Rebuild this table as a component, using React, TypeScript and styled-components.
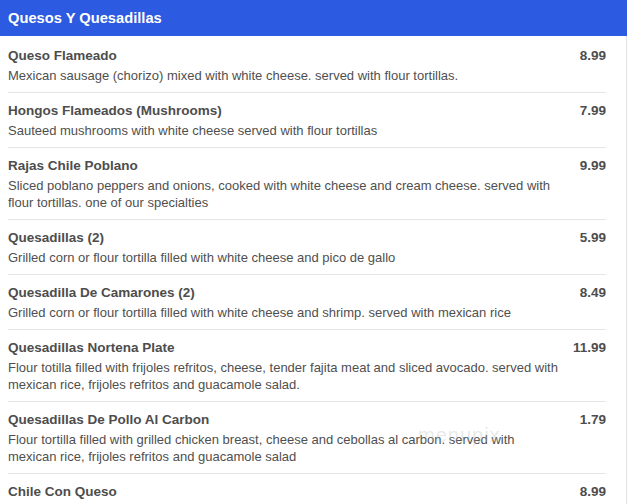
import React from "react";
import styled, { createGlobalStyle } from "styled-components";

const Global = createGlobalStyle`
  html, body { margin: 0; padding: 0; background: #fff; }
  body { font-family: "Liberation Sans", Arial, sans-serif; }
`;

const Panel = styled.div`
  position: relative;
  width: 627px;
  border-right: 1px solid #e2e2e2;
  min-height: 504px;
  box-sizing: border-box;
`;

const Header = styled.div`
  height: 36px;
  background: #2c5ae0;
  color: #fff;
  font-weight: bold;
  font-size: 14.7px;
  display: flex;
  align-items: center;
  padding-left: 8px;
  margin-right: -1px;
`;

const List = styled.div`
  padding: 2px 20px 0 8px;
`;

const Row = styled.div`
  display: flex;
  justify-content: space-between;
  gap: 12px;
  padding: 9px 0 8px;
  border-bottom: 1px solid #e6e6e6;
  &:last-child { border-bottom: none; }
`;

const Info = styled.div`
  display: flex;
  flex-direction: column;
  gap: 3px;
  max-width: 570px;
`;

const Name = styled.div`
  font-size: 13.5px;
  font-weight: bold;
  color: #4d4d4d;
  line-height: 17px;
`;

const Desc = styled.div`
  font-size: 13px;
  color: #4f4f4f;
  line-height: 17px;
  white-space: pre-line;
`;

const Price = styled.div`
  font-size: 13.5px;
  font-weight: bold;
  color: #4d4d4d;
  line-height: 17px;
  white-space: nowrap;
`;

const Watermark = styled.div`
  position: absolute;
  left: 418px;
  top: 424px;
  font-size: 20px;
  letter-spacing: 1px;
  color: rgba(180, 180, 180, 0.3);
  pointer-events: none;
`;

const items = [
  { name: "Queso Flameado", desc: "Mexican sausage (chorizo) mixed with white cheese. served with flour tortillas.", price: "8.99" },
  { name: "Hongos Flameados (Mushrooms)", desc: "Sauteed mushrooms with white cheese served with flour tortillas", price: "7.99" },
  { name: "Rajas Chile Poblano", desc: "Sliced poblano peppers and onions, cooked with white cheese and cream cheese. served with\nflour tortillas. one of our specialties", price: "9.99" },
  { name: "Quesadillas (2)", desc: "Grilled corn or flour tortilla filled with white cheese and pico de gallo", price: "5.99" },
  { name: "Quesadilla De Camarones (2)", desc: "Grilled corn or flour tortilla filled with white cheese and shrimp. served with mexican rice", price: "8.49" },
  { name: "Quesadillas Nortena Plate", desc: "Flour totilla filled with frijoles refritos, cheese, tender fajita meat and sliced avocado. served with\nmexican rice, frijoles refritos and guacamole salad.", price: "11.99" },
  { name: "Quesadillas De Pollo Al Carbon", desc: "Flour tortilla filled with grilled chicken breast, cheese and cebollas al carbon. served with\nmexican rice, frijoles refritos and guacamole salad", price: "1.79" },
  { name: "Chile Con Queso", desc: "", price: "8.99" },
];

export default function App() {
  return (
    <>
      <Global />
      <Panel>
        <Header>Quesos Y Quesadillas</Header>
        <List>
          {items.map((it) => (
            <Row key={it.name}>
              <Info>
                <Name>{it.name}</Name>
                {it.desc && <Desc>{it.desc}</Desc>}
              </Info>
              <Price>{it.price}</Price>
            </Row>
          ))}
        </List>
        <Watermark>menupix</Watermark>
      </Panel>
    </>
  );
}
